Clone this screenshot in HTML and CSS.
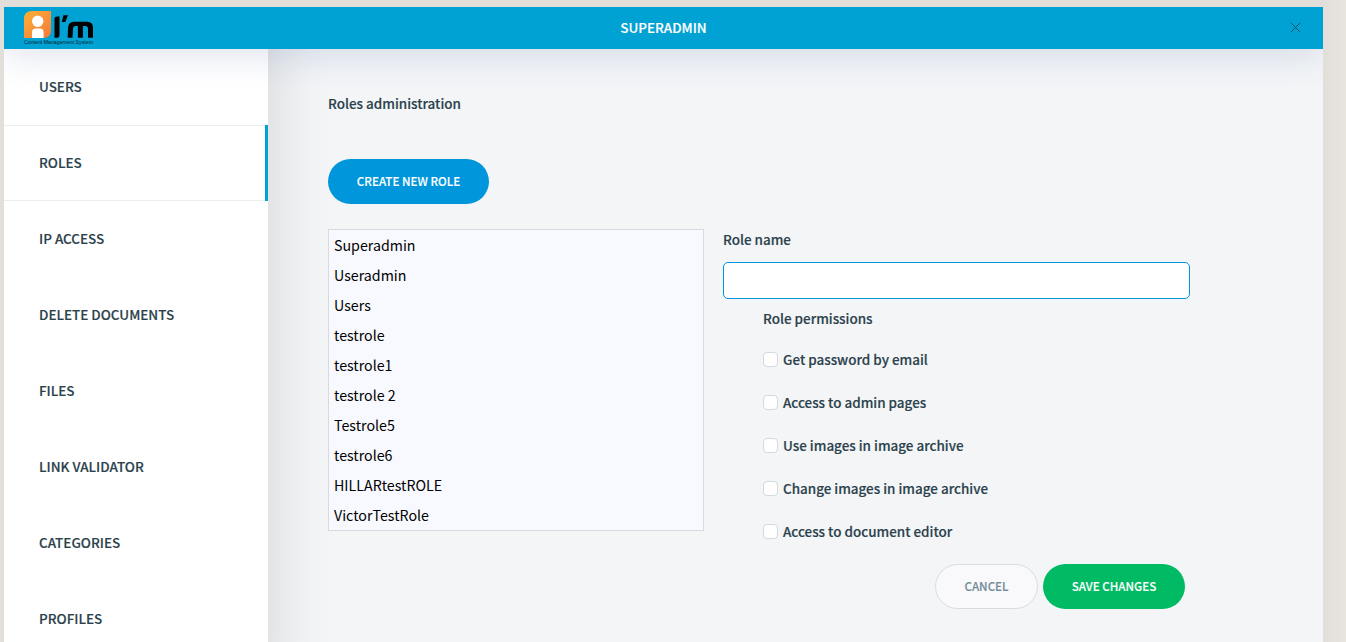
FILE: index.html
```html
<!DOCTYPE html>
<html lang="en">
<head>
<meta charset="utf-8">
<title>Superadmin</title>
<link rel="stylesheet" href="styles.css">
</head>
<body>
<div class="window">
  <header class="header">
    <svg class="logo" width="72" height="36" viewBox="0 0 72 36">
      <defs><linearGradient id="badge" x1="0" y1="0" x2="1" y2="1"><stop offset="0" stop-color="#fbb034"/><stop offset="1" stop-color="#f5793b"/></linearGradient></defs>
      <path d="M8 0H27V19Q27 27 19 27H0V8Q0 0 8 0Z" fill="url(#badge)"/>
      <circle cx="13.700" cy="10.300" r="5.700" fill="#fff"/>
      <path d="M8 27V21.500Q8 17.600 11.500 17.600H16Q19.600 17.600 19.600 21.500V27Z" fill="#fff"/>
      <path d="M30.500 8Q30.500 5.500 33 5.500H35.500V24Q35.500 26.700 33 26.700H30.500ZM39.500 4.300H44L41.300 11H37.800Z"/>
      <path d="M43.700 26.700L44 17Q44.300 10.800 50 10.800H63Q69 10.800 69 17V26.700H64V18Q64 15 61.500 15H58.900V26.700H53.900V15H51.500Q49 15 49 18L48.500 26.700Z"/>
      <text class="logo-text" x="0" y="33.300" textLength="69" lengthAdjust="spacingAndGlyphs">Content Management System</text>
    </svg>
    <h1 class="title">SUPERADMIN</h1>
    <svg class="close" width="11" height="11" viewBox="0 0 11 11"><path d="M.8.8L10.200 10.200M10.200.8L.8 10.200"/></svg>
  </header>
  <div class="body">
    <nav class="sidebar">
      <a class="tab">USERS</a>
      <a class="tab active">ROLES</a>
      <a class="tab">IP ACCESS</a>
      <a class="tab">DELETE DOCUMENTS</a>
      <a class="tab">FILES</a>
      <a class="tab">LINK VALIDATOR</a>
      <a class="tab">CATEGORIES</a>
      <a class="tab">PROFILES</a>
    </nav>
    <main class="content">
      <h2 class="heading">Roles administration</h2>
      <button class="button create">CREATE NEW ROLE</button>
      <div class="columns">
        <ul class="roles">
          <li>Superadmin</li><li>Useradmin</li><li>Users</li><li>testrole</li><li>testrole1</li><li>testrole 2</li><li>Testrole5</li><li>testrole6</li><li>HILLARtestROLE</li><li>VictorTestRole</li>
        </ul>
        <section class="editor">
          <label class="label" for="name">Role name</label>
          <input class="field" id="name" type="text">
          <div class="permissions">
            <div class="label">Role permissions</div>
            <label class="check"><span class="box"></span>Get password by email</label>
            <label class="check"><span class="box"></span>Access to admin pages</label>
            <label class="check"><span class="box"></span>Use images in image archive</label>
            <label class="check"><span class="box"></span>Change images in image archive</label>
            <label class="check"><span class="box"></span>Access to document editor</label>
          </div>
          <div class="actions">
            <button class="button cancel">CANCEL</button>
            <button class="button save">SAVE CHANGES</button>
          </div>
        </section>
      </div>
    </main>
  </div>
</div>
</body>
</html>
```

FILE: styles.css
```css
* { box-sizing: border-box; }
body {
  margin: 0;
  height: 642px;
  overflow: hidden;
  padding: 7px 23px 0 4px;
  background: linear-gradient(90deg, #e2dfda 1323px, #e8e5df 1346px);
  font-family: "Noto Sans CJK SC", "Noto Sans", sans-serif;
  font-size: 13.45px;
  font-weight: 500;
  -webkit-text-stroke: .15px;
  color: #2b414b;
}
.window { height: 635px; display: flex; flex-direction: column; overflow: hidden; }
.header {
  position: relative;
  z-index: 2;
  height: 42px;
  flex: none;
  display: grid;
  grid-template-columns: 1fr auto 1fr;
  align-items: center;
  padding: 0 20px 0 20px;
  background: #00a1d3;
  box-shadow: 0 5px 36px rgba(73, 93, 160, .19);
}
.logo { margin-top: 2px; }
.logo-text { font: 400 4.8px "Liberation Sans", sans-serif; fill: #06242e; -webkit-text-stroke: .1px; }
.title { margin: 0 0 2px; color: #fff; font-size: 13.45px; font-weight: 500; line-height: 20px; }
.close { justify-self: end; margin: 0 2px 1px 0; stroke: #0b4a60; stroke-width: .9; }
.body { flex: 1; min-height: 0; display: flex; background: #f3f5f7; overflow: hidden; }
.sidebar {
  width: 264px;
  flex: none;
  margin: -60px 0;
  padding-top: 60px;
  background: #fff;
  box-shadow: 0 0 60px rgba(0, 0, 0, .14);
}
.tab { display: flex; align-items: center; height: 76px; padding: 0 0 2px 35px; }
.active {
  box-shadow: inset -3px 0 #00a1d3, inset 0 1px #ebeced, inset 0 -1px #ebeced;
}
.content { flex: 1; padding: 44px 0 0 60px; }
.heading { margin: 0 0 46px; font-size: 13.45px; font-weight: 500; line-height: 20px; }
.button {
  height: 45px;
  display: block;
  padding: 0 0 2px;
  border: 0;
  border-radius: 23px;
  color: #fff;
  font: 500 11.6px "Noto Sans CJK SC", "Noto Sans", sans-serif;
  -webkit-text-stroke: .12px;
}
.create { width: 161px; background: #0096dc; }
.columns { display: flex; gap: 19px; margin-top: 25px; }
.roles {
  width: 376px;
  height: 302px;
  margin: 0;
  padding: 0 5px;
  list-style: none;
  border: 1px solid #d8dadd;
  background: #f8f9ff;
  color: #000;
  font-size: 14.23px;
  font-weight: 400;
  line-height: 30px;
  -webkit-text-stroke: 0;
}
.editor { width: 467px; }
.label { display: block; height: 20px; line-height: 20px; }
.field {
  display: block;
  width: 100%;
  height: 37px;
  margin: 13px 0 9px;
  border: 1px solid #0096dc;
  border-radius: 5px;
  background: #fff;
}
.permissions { padding-left: 40px; }
.check { display: flex; align-items: center; gap: 5px; height: 20px; line-height: 20px; margin-top: 23px; }
.label + .check { margin-top: 21px; }
.box { width: 15px; height: 15px; border: 1px solid #d3d9de; border-radius: 4px; background: #fff; }
.actions { display: flex; justify-content: flex-end; gap: 5px; margin: 23px 5px 0 0; }
.cancel { width: 103px; border: 1px solid #d8dde0; background: #f9f9fc; color: #738c98; }
.save { width: 142px; background: #00ba64; }
```
